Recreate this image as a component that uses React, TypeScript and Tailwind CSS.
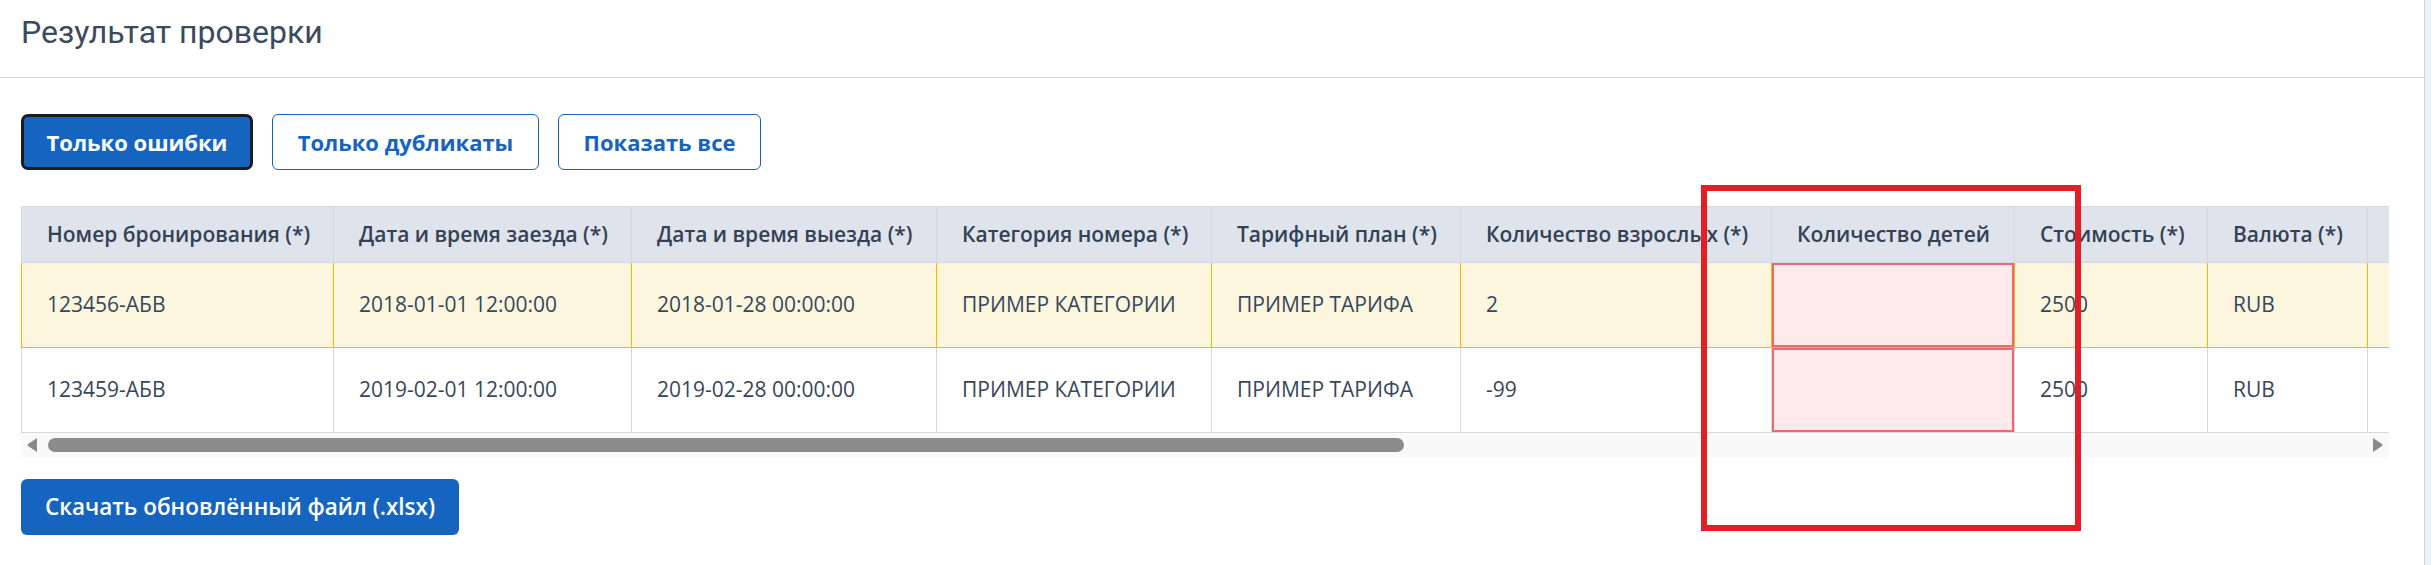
import React from "react"

const columns = [
  { title: "Номер бронирования (*)", width: "w-[312px]" },
  { title: "Дата и время заезда (*)", width: "w-[298px]" },
  { title: "Дата и время выезда (*)", width: "w-[305px]" },
  { title: "Категория номера (*)", width: "w-[275px]" },
  { title: "Тарифный план (*)", width: "w-[249px]" },
  { title: "Количество взрослых (*)", width: "w-[311px]" },
  { title: "Количество детей", width: "w-[243px]" },
  { title: "Стоимость (*)", width: "w-[193px]" },
  { title: "Валюта (*)", width: "w-[160px]" },
  { title: "", width: "w-[240px]" },
]

const rows = [
  {
    duplicate: true,
    cells: ["123456-АБВ", "2018-01-01 12:00:00", "2018-01-28 00:00:00", "ПРИМЕР КАТЕГОРИИ", "ПРИМЕР ТАРИФА", "2", "", "2500", "RUB", ""],
  },
  {
    duplicate: false,
    cells: ["123459-АБВ", "2019-02-01 12:00:00", "2019-02-28 00:00:00", "ПРИМЕР КАТЕГОРИИ", "ПРИМЕР ТАРИФА", "-99", "", "2500", "RUB", ""],
  },
]

// column with validation errors
const errorCol = 6

function cellClass(duplicate: boolean, isError: boolean) {
  const border = duplicate ? "border-[#ffb400]" : "border-[#d3d9e3]"
  if (isError) return `${border} bg-[#ffe9ec] shadow-[inset_0_0_0_2px_#ec6b72]`
  return duplicate ? `${border} bg-[#fdf6df]` : `${border} bg-white`
}

export default function App() {
  return (
    <div className="relative flex h-[565px] w-full bg-[#eef1f5] font-['Open_Sans',sans-serif] text-[#37475b]">
      <div className="w-[2425px] shrink-0 border-r border-[#cfd6e0] bg-white">
        {/* Header */}
        <div className="h-[78px] border-b border-[#d3d9e2] pl-[21px] pt-[10px]">
          <h1 className="font-['Roboto',sans-serif] text-[32px] leading-[44px] text-[#3b4a5d]">
            Результат проверки
          </h1>
        </div>

        <div className="pl-[21px]">
          {/* Filters */}
          <div className="mt-[36px] flex gap-[19px]">
            <button className="h-[56px] w-[232px] rounded-[7px] border-[3px] border-[#1c1c1c] bg-[#1565c0] text-[22px] font-bold text-white">
              Только ошибки
            </button>
            <button className="h-[56px] w-[267px] rounded-[6px] border border-[#1565c0] bg-white text-[22px] font-bold text-[#1565c0]">
              Только дубликаты
            </button>
            <button className="h-[56px] w-[203px] rounded-[6px] border border-[#1565c0] bg-white text-[22px] font-bold text-[#1565c0]">
              Показать все
            </button>
          </div>

          {/* Table */}
          <div className="mt-[36px] w-[2368px] overflow-hidden">
            <table className="w-[2587px] table-fixed border-collapse text-left text-[21px]">
              <thead>
                <tr>
                  {columns.map((c, i) => (
                    <th
                      key={i}
                      className={`${c.width} h-[56px] whitespace-nowrap border border-[#d3d9e3] bg-[#dfe3eb] pl-[25px] pr-0 font-semibold text-[#334255]`}
                    >
                      {c.title}
                    </th>
                  ))}
                </tr>
              </thead>
              <tbody>
                {rows.map((r, ri) => (
                  <tr key={ri}>
                    {r.cells.map((v, ci) => (
                      <td
                        key={ci}
                        className={`h-[85px] whitespace-nowrap border pl-[25px] pr-0 ${cellClass(r.duplicate, ci === errorCol)}`}
                      >
                        {v}
                      </td>
                    ))}
                  </tr>
                ))}
              </tbody>
            </table>

            {/* Horizontal scrollbar */}
            <div className="flex h-[24px] items-center bg-[#f9f9f9] pl-[6px] pr-[6px]">
              <svg width="10" height="14" viewBox="0 0 10 14" className="shrink-0">
                <path d="M10 0 L10 14 L1 8 Q0 7 1 6 Z" fill="#8a8a8a" />
              </svg>
              <div className="ml-[11px] h-[14px] w-[1356px] rounded-full bg-[#8b8b8b]" />
              <div className="flex-1" />
              <svg width="10" height="14" viewBox="0 0 10 14" className="shrink-0">
                <path d="M0 0 L0 14 L9 8 Q10 7 9 6 Z" fill="#8a8a8a" />
              </svg>
            </div>
          </div>

          {/* Download */}
          <button className="mt-[22px] h-[56px] w-[438px] rounded-[6px] bg-[#1565c0] text-[22.5px] font-semibold text-white">
            Скачать обновлённый файл (.xlsx)
          </button>
        </div>
      </div>

      {/* Annotation frame */}
      <div className="pointer-events-none absolute left-[1701px] top-[185px] h-[346px] w-[380px] border-[6px] border-[#e31e24]" />
    </div>
  )
}
